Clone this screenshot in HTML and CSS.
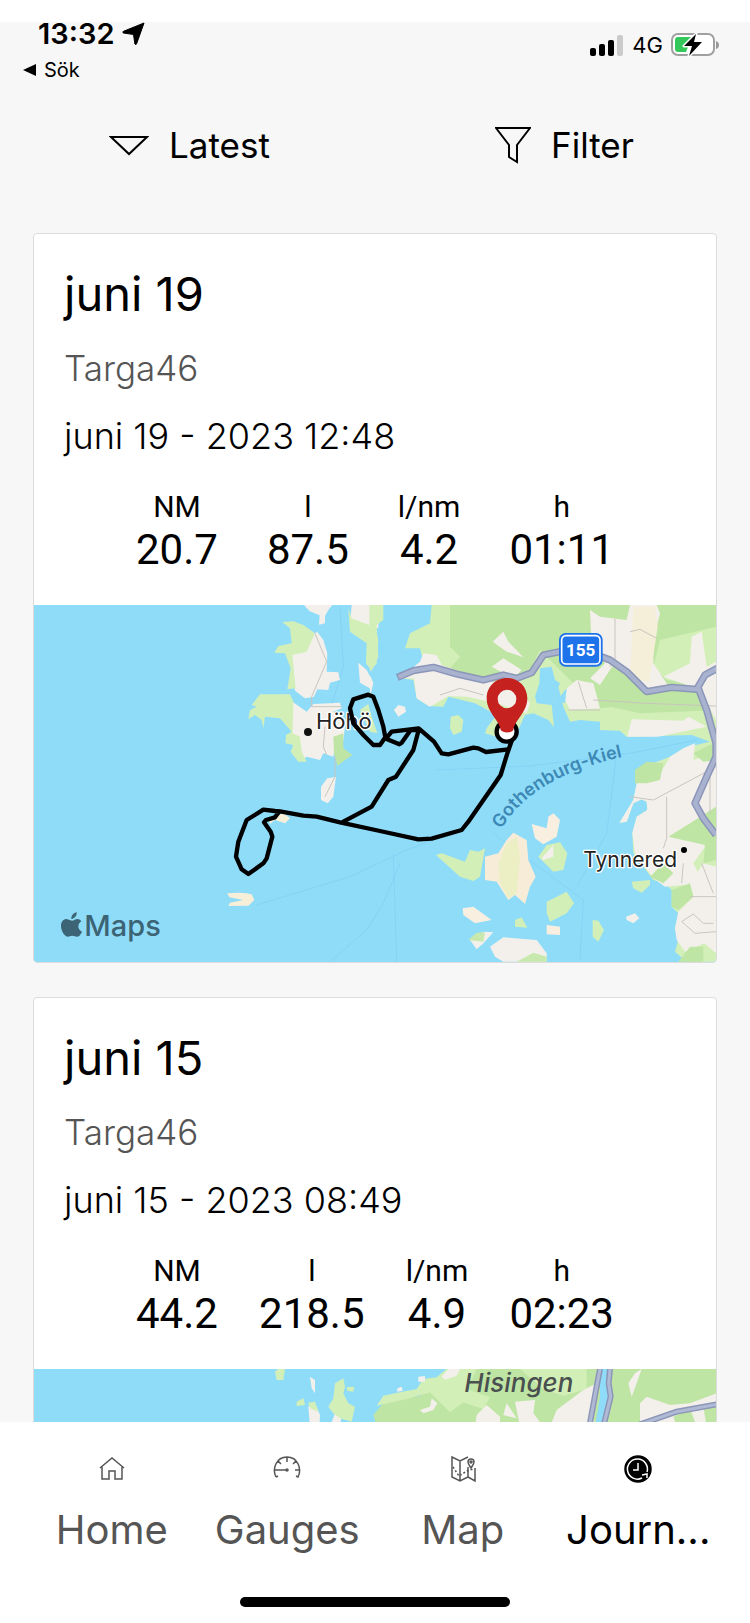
FILE: index.html
```html
<!DOCTYPE html>
<html lang="en">
<head>
    <meta charset="UTF-8">
    <meta name="viewport" content="width=device-width, initial-scale=1.0">
    <title>Journals</title>
    <link rel="stylesheet" href="styles.css">
</head>
<body>
    <div class="screen">
        <header class="status">
            <div class="status-left">
                <div class="time">13:32
                    <svg width="23" height="23" viewBox="0 0 23 23"><path d="M22 1 14.500 22q-.8 1.500-1.600 0L11.500 12.500 1.500 11q-1.600-.7 0-1.700Z" fill="#000" stroke="#000" stroke-linejoin="round"/></svg>
                </div>
                <a class="back" href="#">
                    <svg width="13" height="12" viewBox="0 0 13 12"><path d="M0 6 13 0v12z"/></svg>
                    Sök
                </a>
            </div>
            <div class="status-right">
                <svg width="34" height="21" viewBox="0 0 34 21">
                    <rect x="0" y="13" width="6" height="8" rx="2"/>
                    <rect x="9" y="9" width="6" height="12" rx="2"/>
                    <rect x="18" y="5" width="6" height="16" rx="2"/>
                    <rect x="27" y="0" width="6" height="21" rx="2" fill="#cbcbcb"/>
                </svg>
                <span>4G</span>
                <svg width="48" height="24" viewBox="0 0 48 24">
                    <rect x="1" y="1" width="42" height="21" rx="6" fill="#fff" stroke="#a0a0a0" stroke-width="2"/>
                    <path d="M7 4h14l-8 10h4l-2 5H7q-3 0-3-3V7q0-3 3-3z" fill="#34c759"/>
                    <path d="M45 8q3 1 3 4t-3 4z" fill="#999"/>
                    <path d="M25 1 13 13h8l-3 10 13-14h-8z" stroke="#fff" stroke-width="3" paint-order="stroke" stroke-linejoin="round"/>
                </svg>
            </div>
        </header>

        <div class="toolbar">
            <button type="button">
                <svg width="40" height="21" viewBox="0 0 40 21"><path d="M2 2h36L20 19z" class="line"/></svg>
                Latest
            </button>
            <button type="button">
                <svg width="36" height="38" viewBox="0 0 36 38"><path d="M1 2h34L22 19v17l-8-5V19z" class="line"/></svg>
                Filter
            </button>
        </div>

        <main class="journals">
            <article class="card">
                <div class="info">
                    <h2>juni 19</h2>
                    <p class="boat">Targa46</p>
                    <p class="date">juni 19 - 2023 12:48</p>
                    <dl class="stats">
                        <div><dt>NM</dt><dd>20.7</dd></div>
                        <div><dt>l</dt><dd>87.5</dd></div>
                        <div><dt>l/nm</dt><dd>4.2</dd></div>
                        <div><dt>h</dt><dd>01:11</dd></div>
                    </dl>
                </div>
                <svg class="map" viewBox="12 15 2046 1071">
                    <!-- ferry lines -->
                    <g fill="none" stroke="#84d3f4" stroke-width="3">
                        <path d="M680 915 960 830 1130 750 1210 720M900 1085 1010 990 1060 910 1110 790M1090 760 1100 1085M1220 510 1500 498 1800 460 2000 420M1390 700 1660 900 1650 1080M1760 460 1730 700 1640 860M930 20 940 200 900 330"/>
                    </g>
                    <!-- western islands -->
                    <g fill="#f3f0ec">
                        <path d="M822 15h85l-12 15-10 18v22l-18 4 2-28-30-12z"/>
                        <path d="M785 160 830 110 862 96 880 120 892 160 890 215 925 217 930 240 900 248 895 270 862 268 852 290 825 295 795 272z"/>
                        <path d="M985 188 1010 210 1028 245 1022 266 990 248z"/>
                        <path d="M780 300 830 335 850 312 930 308 935 325 910 335 930 350 945 380 940 420 915 440 910 470 880 460 870 480 830 470 810 485 785 420z"/>
                        <path d="M892 535 918 530 910 590 893 610 873 600 873 560z"/>
                        <path d="M965 15h80v70l-85-15z"/>
                    </g>
                    <g fill="#d3efb8">
                        <path d="M757 66 790 64 820 75 855 100 830 155 787 165 797 265 772 268 782 205 765 160 733 158 745 138 785 130 780 85z"/>
                        <path d="M690 283H780L790 305 788 400 810 410 815 455 830 485 805 485 782 455 790 435 766 430 768 405 785 395 750 355 705 350 700 385 695 360 675 345 655 358 660 330 680 320 665 315z"/>
                        <path d="M990 330 1015 312 1025 350 1042 400 1020 395z"/>
                        <path d="M955 25 965 55 1018 75V15H1060V60L1040 75 1045 170 1025 212 1008 190 1010 130 960 95z"/>
                    </g>
                    <path d="M910 410 940 400 940 445 967 465 945 480 922 498 918 480 912 460z" fill="#bfe5a4"/>
                    <path d="M592 880 Q640 875 665 883 L673 900 655 917 595 918 600 908 640 900 598 892z" fill="#f8efd9"/>
                    <path d="M715 655 760 640 780 655 765 670 735 660 720 672z" fill="#f8efd9"/>
                    <path d="M855 100 890 185 845 290v30h90M885 380l-5 60 10 25M915 470v60l-30 60" class="street"/>

                    <!-- mainland -->
                    <g transform="translate(1020 0)">
                        <path d="M185 15H1038V440L1038 1085H950L915 1055 925 1020 915 985 925 940 905 920V870L885 850 850 840 790 760 787 700 800 650 832 630 830 605 815 598 790 610 770 665 750 668 790 600 800 555 795 510 850 490 900 470 955 440 1020 425 965 405 770 410 750 392 690 390V365L630 360 600 365 580 320 565 260 545 315 552 382 535 360 490 340 465 345 440 400 380 410 345 400 350 385 380 345 315 310 235 290 220 320 175 318 140 295 130 240 95 235 160 185 150 145 105 145 120 100 180 70z" fill="#d3efb8"/>
                        <path d="M240 15H1038V80L870 120 850 200 890 240 1038 260V330L830 310 690 325 600 240 510 150 470 230 340 235 240 205 270 170 240 140z" fill="#bfe5a4"/>
                        <path d="M770 260h60l220 50v20l-240 10-90-20-50-30z" fill="#bfe5a4"/>
                        <g fill="#f3f0ec">
                            <path d="M150 185 160 160 200 165 215 195 340 240 440 260 480 310 470 340 380 310 290 290 235 288 180 320 140 295 132 235 90 235z"/>
                            <path d="M368 125 400 95 415 125 460 172 410 155z"/>
                            <path d="M365 200 400 175 455 210 430 235z"/>
                            <path d="M660 30 690 50 770 60 780 15H860L870 40 850 120V190L900 265 830 270 740 180 690 255 660 235 705 190 665 145z"/>
                            <path d="M965 110 995 95 1010 200 1038 185V360L1000 290 950 255 880 230 960 190z"/>
                            <path d="M590 265 620 240 670 250 690 325 600 330 585 300z"/>
                            <path d="M785 358 940 362 955 350 1010 380 960 390 865 410 772 410z"/>
                            <path d="M940 445 975 430 970 480 1038 460V620L1000 650 900 710 990 710 1005 740 970 790 1000 850 885 860 850 835 795 760 787 700 800 650 832 630 830 605 815 598 790 610 770 665 748 668 790 600 800 550 860 540 900 470z"/>
                            <path d="M1000 790 1038 800V1060L1003 1030 945 1055 920 1020 915 985 925 935 970 890 960 850z"/>
                        </g>
                        <path d="M790 20h65l8 60-15 100-10 65-60-10 5-60z" fill="#f5eed8"/>
                        <path d="M795 510 830 485 880 490 870 540 830 550 795 550zM970 460 1038 425V480L1000 485zM895 710 960 670 1038 620V780L1000 790 1005 735zM905 870 960 850 970 890 925 930 905 920zM840 830 880 790 910 820 880 850zM925 1085 960 1040 1000 1040V1085z" fill="#bfe5a4"/>
                        <!-- inlet -->
                        <path d="M510 205 545 200 555 240 570 250 545 315 500 310 495 290 508 250zM570 290 590 265 585 310 570 305z" fill="#8fdcf9"/>
                        <!-- green strip on the west side -->
                        <path d="M0 15H30L38 40 15 75 25 120 20 190 0 215z" fill="#d3efb8"/>
                        <path d="M72 330 85 315 105 320 108 335 85 350zM0 225 10 250 0 290z" fill="#f3f0ec"/>
                        <!-- archipelago -->
                        <path d="M242 350 265 345 280 360 275 395 250 405 240 385zM198 765 215 760 285 785 300 750 325 755 345 745 330 830 310 843 270 830zM505 770 530 735 570 727 592 760 580 810 550 815zM530 905 560 890 590 875 612 910 590 940 540 965 530 940zM435 960 455 952 472 983 435 980zM668 960 685 962 702 990 685 1025 668 1010zM785 845 840 840 840 855 815 878 790 865z" fill="#d3efb8"/>
                        <path d="M345 770 385 760 410 720 430 698 470 720 475 780 497 830 480 860 465 912 435 885 415 900 380 845 345 840z" fill="#f7ecd8"/>
                        <path d="M385 790 410 730 440 710 450 770 440 880 415 895 390 850z" fill="#ecefc4"/>
                        <path d="M485 672 530 685 535 650 550 640 570 660 560 710 520 733 495 715zM278 925 310 920 365 960 315 970 280 945zM530 975 570 980 570 1005 530 1003z" fill="#f8efe0"/>
                        <path d="M360 1040 400 1012 500 1020 530 1060V1085H400L375 1070zM768 950 795 940 808 955 790 970 770 960zM515 775 550 735 550 770 520 780zM300 1020 340 995 370 997 340 1030 320 1048z" fill="#f3f0ec"/>
                        <path d="M440 1085 490 1058 530 1070V1085zM295 1020 320 998 345 997 340 1025z" fill="#c7e9ad"/>
                        <path d="M210 285 270 265 340 285M625 245 650 325M595 330H690M780 95 810 88 860 115M735 55V180L720 200M670 300 830 310 1038 318M780 590 850 600 1038 500M890 590V715L880 745M1020 500V640M940 790 935 850M960 890H1038M995 790 1030 880M935 965 970 942 1000 970H1030M935 965 975 1000 1038 995" class="street"/>
                        <!-- road 155 -->
                        <g fill="none" stroke-linejoin="round">
                            <path d="M82 232 130 212 190 202 260 222 340 240 400 225 440 235 485 218 520 165 570 155 640 150 720 180 770 215 830 275 905 262 980 268 1005 225 1042 205M985 265 1010 330 1038 430V470L1010 530 975 610 1000 655 1038 705" stroke="#8b96b8" stroke-width="22"/>
                            <path d="M86 231 130 212 190 202 260 222 340 240 400 225 440 235 485 218 520 165 570 155 640 150 720 180 770 215 830 275 905 262 980 268 1005 225 1042 205M985 265 1010 330 1038 430V470L1010 530 975 610 1000 655 1038 705" stroke="#a9b3d0" stroke-width="13"/>
                        </g>
                        <rect x="567" y="99" width="131" height="101" rx="20" fill="#1f73ea"/>
                        <rect x="575" y="107" width="115" height="85" rx="13" fill="#1f73ea" stroke="#fff" stroke-width="5"/>
                        <text x="632" y="169" class="road-no">155</text>
                        <path id="ferry" d="M394 688Q490 520 800 462" fill="none"/>
                        <text class="ferry"><textPath href="#ferry">Gothenburg-Kiel</textPath></text>
                        <circle cx="942" cy="750" r="9"/>
                        <text x="640" y="800" class="place small">Tynnered</text>
                    </g>
                    <circle cx="834" cy="396" r="12" fill="#111"/>
                    <text x="858" y="388" class="place">Höhö</text>

                    <!-- track -->
                    <g fill="none" stroke="#000" stroke-width="13" stroke-linejoin="round" stroke-linecap="round">
                        <path d="M1446 420 1432 460 1412 525 1395 550 1315 665 1295 690 1205 716 1165 718 1050 693 930 667 860 650 820 647 750 634 735 633 700 629 650 660 625 725 618 770 635 808 655 822 700 790 710 775 727 710 722 695 702 667 708 660 735 652 745 638"/>
                        <path d="M940 665 1025 620 1075 540 1098 530 1150 450 1166 390 1142 390 1115 428 1108 433 1068 416 1085 395 1166 385 1212 425 1235 460 1255 463 1330 443 1345 445 1368 456 1435 448"/>
                        <path d="M1066 412 1060 380 1045 330 1030 290 1015 284 970 298 960 325 970 370 1000 405 1030 435 1050 435 1066 412"/>
                        <circle cx="1430" cy="395" r="30" fill="#fff"/>
                    </g>
                    <path d="M1431 234c-34 0-61 26-61 61 0 42 38 66 42 95 7 10 31 10 38 0 4-29 42-53 42-95 0-35-27-61-61-61zm0 35a28 28 0 1 1 0 56 28 28 0 1 1 0-56z" fill="#c5221f" fill-rule="evenodd"/>

                    <g fill="#3c6475">
                        <path d="M140 937c1 10-6 19-16 20-1-10 7-19 16-20zM126 962c6 0 10-5 17-5 5 0 9 3 11 7-13 8-11 25 2 31-4 9-9 15-15 15-5 0-8-3-14-3s-9 3-14 3c-14-1-30-38-12-50 9-7 16 2 25 2z"/>
                        <text x="163" y="1009" class="brand">Maps</text>
                    </g>
                </svg>
            </article>

            <article class="card">
                <div class="info">
                    <h2>juni 15</h2>
                    <p class="boat">Targa46</p>
                    <p class="date">juni 15 - 2023 08:49</p>
                    <dl class="stats">
                        <div><dt>NM</dt><dd>44.2</dd></div>
                        <div><dt>l</dt><dd>218.5</dd></div>
                        <div><dt>l/nm</dt><dd>4.9</dd></div>
                        <div><dt>h</dt><dd>02:23</dd></div>
                    </dl>
                </div>
                <svg class="map" viewBox="12 27 2046 1071">
                    <g transform="translate(690 0)">
                        <path d="M560 27H1370V1100H330L345 180 340 165 370 130 410 115 480 108 490 85 530 80 545 55z" fill="#bfe5a4"/>
                        <path d="M560 27h90l-30 60 70 25-20 35-60-20-40 30-60-60-70 20-90 20 20-30 50-10 50-10 20-30 40-5zM780 27h200v60l-70 20-60-20z" fill="#d3efb8"/>
                        <g fill="#f3f0ec">
                            <path d="M480 150 510 140 515 115 532 130 520 150 490 160zM545 50 565 27h35l-10 20-35 12zM650 165 680 135 720 170 720 200H645zM765 125 825 120 820 160 850 200H780zM740 130 770 175 730 165zM890 150 970 90 1010 70 1000 200H870z"/>
                            <path d="M1125 40 1145 27 1130 70 1115 110 1105 70zM1140 130 1160 110 1230 135 1290 130 1370 100V200H1140z"/>
                            <path d="M475 50 495 48 495 65 475 65zM412 85 425 80 428 92 412 95zM150 50 165 60 165 100 155 85zM145 140 165 130 180 165 178 200H150zM210 200 225 160 245 165 240 200z"/>
                        </g>
                        <path d="M1240 170 1290 145 1310 200H1250zM1330 140 1370 130V200H1340z" fill="#bfe5a4"/>
                        <path d="M45 35 55 27H75L70 60 50 60zM110 125 130 115 135 135 110 138zM145 128 165 125 175 155 150 145zM225 70 250 55 255 80 250 100 265 130 285 140 275 185 240 175 220 160 205 140 220 115zM260 82 283 80 280 95 262 92z" fill="#d3efb8"/>
                        <path d="M1020 27h30l-10 50 10 40-25 83h-20l15-90z" fill="#8fdcf9"/>
                        <path d="M1020 27 1008 90 988 200M1050 27 1046 70 1052 110 1030 200M1120 200 1250 155 1370 133" fill="none" stroke="#8b96b8" stroke-width="18"/>
                        <path d="M1020 27 1008 90 988 200M1050 27 1046 70 1052 110 1030 200M1120 200 1250 155 1370 133" fill="none" stroke="#b1bad5" stroke-width="9"/>
                        <text x="613" y="95" class="district">Hisingen</text>
                    </g>
                </svg>
            </article>
        </main>

        <nav class="tabs">
            <a href="#home">
                <svg width="28" height="28" viewBox="0 0 28 28"><path d="M2 13 14 3l12 10M4 12v12h7v-8h6v8h7V12"/></svg>
                Home
            </a>
            <a href="#gauges">
                <svg width="28" height="28" viewBox="0 0 28 28"><path d="M5 21l-2 1M3 22C-1 14 3 2 14 2s15 12 11 20l-2-1M1 15h13M14 2v5M5 6l3 3M23 6l-3 3M27 15h-5"/><circle cx="14" cy="15" r="1"/></svg>
                Gauges
            </a>
            <a href="#map">
                <svg width="28" height="28" viewBox="0 0 28 28"><path d="M19 2 11 6 3 2v20l8 4 8-4V12M11 6v20M19 22l7 4V13M22 13c-2-3-3-4-3-6a3 3 0 0 1 6 0c0 2-1 3-3 6z"/><circle cx="22" cy="7" r="1"/><path d="M4 12l6 9 8-5 6-2" stroke-dasharray="2 2"/></svg>
                Map
            </a>
            <a href="#journals" class="active">
                <svg width="28" height="28" viewBox="0 0 28 28"><circle cx="14" cy="14" r="13" fill="#000" stroke="#000"/><path d="M23 17a10 10 0 1 0-5 6M14 8v7H9M18 20l5-1v4" stroke="#fff" stroke-width="1.500"/></svg>
                Journ...
            </a>
        </nav>
        <div class="home-bar"></div>
    </div>
</body>
</html>
```

FILE: styles.css
```css
* {
    box-sizing: border-box;
}
body {
    font-family: Inter, "Liberation Sans", sans-serif;
    margin: 0;
    background-color: white;
    color: black;
}
h2, p, dl, dd {
    margin: 0;
}
svg {
    flex: none;
}
.screen {
    display: flex;
    flex-direction: column;
    height: 100vh;
    border-top: 22px solid white;
    background-color: #f7f7f7;
}

/* status bar */
.status {
    display: flex;
    justify-content: space-between;
    padding: 0 31px 0 23px;
}
.time {
    display: flex;
    align-items: center;
    gap: 8px;
    padding-left: 15px;
    font-size: 29px;
    font-weight: 600;
    line-height: 22px;
}
.back {
    display: flex;
    align-items: center;
    gap: 8px;
    margin-top: 12px;
    font-size: 20px;
    line-height: 26px;
    color: black;
    text-decoration: none;
}
.status-right {
    display: flex;
    align-items: center;
    align-self: flex-start;
    gap: 8px;
    margin-top: 11px;
    font-size: 22px;
    line-height: 24px;
}

/* sort and filter */
.toolbar {
    display: flex;
    padding: 36px 0 62px;
}
.toolbar button {
    display: flex;
    flex: 1;
    align-items: center;
    justify-content: center;
    gap: 20px;
    padding: 0 0 0 4px;
    border: none;
    background: none;
    color: black;
    font-family: inherit;
    font-size: 35px;
    line-height: 52px;
    cursor: pointer;
}
.line {
    fill: none;
    stroke: #000;
    stroke-width: 2;
}

/* journal cards */
.journals {
    flex: 1;
    min-height: 0;
    overflow: hidden;
    padding: 0 33px;
}
.card {
    margin-bottom: 34px;
    border: 1px solid #dcdcdc;
    border-radius: 4px;
    background-color: white;
    overflow: hidden;
}
.info {
    padding: 32px 30px 30px;
}
.info h2 {
    font-size: 47px;
    font-weight: 400;
    line-height: 56px;
}
.boat, .date {
    margin-top: 24px;
    font-size: 35px;
    font-weight: 300;
    line-height: 44px;
}
.boat {
    color: #555;
}
.date {
    font-size: 36px;
}
.stats {
    display: flex;
    justify-content: space-between;
    margin-top: 31px;
    padding: 0 72px;
    font-family: Roboto, sans-serif;
    text-align: center;
}
.stats dt {
    font-size: 30px;
    line-height: 36px;
}
.stats dd {
    font-size: 42px;
    line-height: 50px;
}

/* maps, three units to a pixel */
.map {
    display: block;
    width: 100%;
    background-color: #8fdcf9;
}
.street {
    fill: none;
    stroke: #c9c4be;
    stroke-width: 3;
}
.place {
    font-size: 66px;
    fill: #222;
    stroke: #fff;
    stroke-width: 8px;
    stroke-linejoin: round;
    paint-order: stroke;
}
.small {
    font-size: 63px;
}
.road-no {
    font-family: Roboto, sans-serif;
    font-size: 51px;
    font-weight: 700;
    fill: #fff;
    text-anchor: middle;
}
.ferry {
    font-size: 54px;
    font-weight: 600;
    fill: #3d88b5;
}
.brand {
    font-size: 87px;
    font-weight: 500;
}
.district {
    font-size: 78px;
    font-style: italic;
    font-weight: 500;
    fill: #4a5050;
}

/* bottom tabs */
.tabs {
    display: flex;
    padding: 33px 24px 0;
    background-color: white;
}
.tabs a {
    display: flex;
    flex: 1;
    flex-direction: column;
    align-items: center;
    gap: 21px;
    color: #555;
    font-size: 40px;
    line-height: 52px;
    text-decoration: none;
    white-space: nowrap;
}
.tabs .active {
    color: black;
}
.tabs svg {
    fill: none;
    stroke: #555;
    stroke-width: 1.500;
}
.home-bar {
    padding: 41px 0 16px;
    background-color: white;
}
.home-bar::before {
    content: "";
    display: block;
    width: 36%;
    height: 10px;
    margin: 0 auto;
    border-radius: 5px;
    background-color: black;
}
```
